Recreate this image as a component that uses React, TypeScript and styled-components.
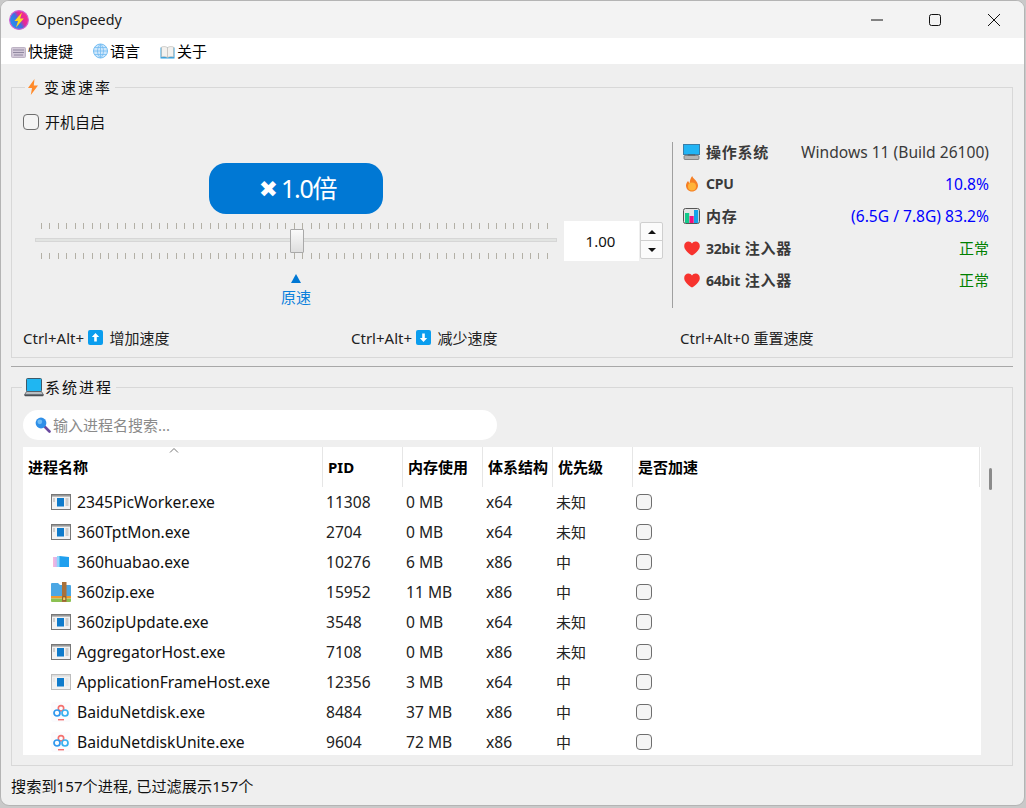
import React from "react";
import styled, { createGlobalStyle } from "styled-components";

const FONT = `"Noto Sans", "Noto Sans CJK SC", "DejaVu Sans", sans-serif`;

const Global = createGlobalStyle`
  html, body { margin: 0; padding: 0; background: #c9c9c9; overflow: hidden; }
  * { box-sizing: border-box; }
  body { font-family: ${FONT}; font-size: 15px; color: #111; }
`;

const Win = styled.div`
  width: 1025px; height: 806px; display: flex; flex-direction: column;
  border: 1px solid #b4b4b4; border-radius: 9px; overflow: hidden; background: #efefef;
`;
const TitleBar = styled.div`
  height: 37px; flex: none; display: flex; align-items: center; padding: 0 1px 0 8px; background: #f3f3f3; font-size: 14px;
`;
const TitleText = styled.span`margin-left: 7px; flex: 1; color: #1a1a1a; font-size: 14.3px;`;
const WinButton = styled.div`
  width: 58.5px; height: 37px; display: flex; align-items: center; justify-content: center;
`;
const MenuBar = styled.div`
  height: 26px; flex: none; display: flex; gap: 20px; align-items: center; padding-left: 10px; background: #fff;
`;
const MenuItem = styled.div`display: flex; align-items: center; gap: 2px; color: #000;`;
const Up = styled.span`margin-bottom: 2px;`;
const Content = styled.div`padding: 23px 11px 0 10px; display: flex; flex-direction: column; flex: none;`;
const Group = styled.section`position: relative; border: 1px solid #d8d8d8;`;
const SpeedGroup = styled(Group)`padding: 26px 11px 10px;`;
const ProcGroup = styled(Group)`margin-top: 20px; padding: 22px 11px 10px;`;
const Legend = styled.div<{ $left: number; $gap: number }>`
  position: absolute; top: -12px; left: ${(p) => p.$left}px; height: 22px; padding: 0 3px 0 2px;
  display: flex; align-items: center; gap: ${(p) => p.$gap}px; background: #efefef; font-size: 15px; letter-spacing: 2px; color: #111;
`;
const LegendText = styled.span`margin-bottom: 2px;`;
const Separator = styled.div`height: 1px; margin-top: 8px; background: #a8a8a8;`;
const CheckRow = styled.label`display: flex; align-items: center; gap: 6px; height: 16px; color: #111;`;
const Check = styled.input.attrs({ type: "checkbox" })`
  appearance: none; margin: 0; width: 16px; height: 16px; flex: none; background: #f4f4f4; border: 1.5px solid #6e6e6e; border-radius: 4px;
`;
const Main = styled.div`display: flex; height: 166px; margin-top: 12px;`;
const SpeedCol = styled.div`width: 649px; flex: none; padding: 21px 0 0 12px; display: flex; flex-direction: column;`;
const SliderWidth = styled.div`width: 522px; flex: none; display: flex; flex-direction: column; align-items: center;`;
const Pill = styled.div`
  width: 174px; height: 51px; background: #0078d4; color: #fff; border-radius: 17px; font-size: 25px; letter-spacing: -1.3px;
  display: flex; align-items: center; justify-content: center; gap: 3px; padding: 0 0 3px 3px;
`;
const Cross = styled.span`font-family: "DejaVu Sans", sans-serif; font-size: 23px; letter-spacing: 0; margin-top: 3px;`;
const SliderRow = styled.div`display: flex; margin-top: 7px; height: 40px;`;
const SliderBody = styled.div`width: 522px; flex: none; position: relative; display: flex; flex-direction: column; padding-top: 2px;`;
const Groove = styled.div`height: 4px; margin: 9px 0 11px; background: #e2e4e2; border: 1px solid #d6d6d6;`;
const Thumb = styled.div`
  position: absolute; left: 255px; top: 8px; width: 14px; height: 24px; border: 1px solid #a9a9a9; border-radius: 1px;
  background: linear-gradient(#fafafa, #dedede);
`;
const ValueInput = styled.div`
  width: 75px; height: 40px; margin-left: 7px; padding: 0 2px 1px 0; background: #fff; color: #111; display: flex; align-items: center; justify-content: center;
`;
const Spin = styled.div`
  width: 23px; height: 37px; margin: 1px 0 0 1px; border: 1px solid #cfcfcf; border-radius: 2px; background: #fbfbfb; display: flex; flex-direction: column;
`;
const SpinPart = styled.div<{ $down?: boolean }>`
  flex: 1; display: flex; align-items: center; justify-content: center;
  ${(p) => (p.$down ? "border-top: 1px solid #cfcfcf;" : "")}
`;
const Arrow = styled.div<{ $down?: boolean }>`
  width: 0; height: 0; border-left: 4px solid transparent; border-right: 4px solid transparent;
  ${(p) => (p.$down ? "border-top: 4px solid #111;" : "border-bottom: 4px solid #111;")}
`;
const Triangle = styled.div`
  width: 0; height: 0; margin-top: 13px; border-left: 5.5px solid transparent; border-right: 5.5px solid transparent; border-bottom: 9px solid #0078d4;
`;
const MarkerText = styled.div`margin-top: 4px; line-height: 20px; color: #0a7fdc;`;
const InfoPanel = styled.div`
  flex: 1; border-left: 1px solid #a0a0a0; padding: 0 12px 0 10px; display: flex; flex-direction: column; gap: 12px;
`;
const InfoRow = styled.div`height: 20px; display: flex; align-items: center; gap: 6px;`;
const InfoIcon = styled.span`width: 17px; height: 20px; flex: none; display: flex; align-items: center; justify-content: center;`;
const InfoLabel = styled.span`font-weight: 700; color: #3a3a3a; letter-spacing: 0.75px; font-size: 15px; margin-bottom: 2px;`;
const LatinPart = styled.span`font-size: 14px; letter-spacing: -0.2px;`;
const InfoValue = styled.span<{ $color: string; $cjk?: boolean }>`
  margin-left: auto; color: ${(p) => p.$color}; font-size: ${(p) => (p.$cjk ? "15px" : "15.6px")};
  margin-bottom: ${(p) => (p.$cjk ? "2px" : "0")};
`;
const Shortcuts = styled.div`display: grid; grid-template-columns: 328px 329px 1fr; height: 20px; margin-top: 19px;`;
const Shortcut = styled.div`display: flex; align-items: center; padding-bottom: 3px; color: #222;`;
const KeyIcon = styled.span`display: flex; margin: 0 7px 0 3.5px;`;
const Search = styled.div`
  width: 474px; height: 30px; border-radius: 15px; background: #fff; display: flex; align-items: center; gap: 2px; padding-left: 12px; color: #8a8a8a;
`;
const TableWrap = styled.div`display: flex; margin-top: 7px; height: 308px;`;
const Table = styled.div`position: relative; width: 958px; flex: none; background: #fff; overflow: hidden;`;
const COLS = "300px 80px 80px 70px 80px 347px";
const HeadRow = styled.div`display: grid; grid-template-columns: ${COLS}; height: 40px;`;
const HeadCell = styled.div`
  display: flex; align-items: center; padding: 0 0 1px 5px; font-weight: 700; font-size: 15px; color: #000; border-right: 1px solid #e6e6e6;
`;
const SortCaret = styled.svg`position: absolute; left: 146px; top: 0;`;
const Row = styled.div`display: grid; grid-template-columns: ${COLS}; height: 30px;`;
const NameCell = styled.div`display: flex; align-items: center; gap: 6px; padding-left: 28px; color: #111; font-size: 15.7px;`;
const Cell = styled.div<{ $cjk?: boolean }>`
  display: flex; align-items: center; padding: ${(p) => (p.$cjk ? "0 0 2px 3px" : "0 0 0 3px")}; color: #222;
  font-size: ${(p) => (p.$cjk ? "15px" : "15.6px")};
`;
const Scrollbar = styled.div`position: relative; width: 19px; flex: none;`;
const ScrollThumb = styled.div`position: absolute; left: 8px; top: 21px; width: 3px; height: 22px; border-radius: 2px; background: #8b8b8b;`;
const StatusBar = styled.div`flex: 1; display: flex; align-items: center; padding: 0 0 2px 10px; color: #111; font-size: 15.2px;`;

const Logo = () => (
  <svg width="20" height="20" viewBox="0 0 20 20">
    <defs>
      <linearGradient id="lg" x1="0" y1="0.8" x2="1" y2="0.2">
        <stop offset="0" stopColor="#1a9cf2" />
        <stop offset="0.45" stopColor="#3f6fe0" />
        <stop offset="0.62" stopColor="#e0289a" />
        <stop offset="1" stopColor="#ff2f86" />
      </linearGradient>
    </defs>
    <circle cx="10" cy="10" r="9.4" fill="url(#lg)" stroke="#cf5fd2" strokeWidth="1.1" />
    <path d="M13 2.6 5.4 11h3.6L7 17.6 14.8 8.6h-3.7z" fill="#ffd91f" />
  </svg>
);
const KeyboardIcon = () => (
  <svg width="15" height="15" viewBox="0 0 15 15">
    <rect x="0.5" y="3.5" width="14" height="10" rx="1" fill="#d2c8d8" stroke="#bdb3c4" />
    <path d="M2 6h11M2 8.5h11M3 11h9" stroke="#9088a0" />
  </svg>
);
const GlobeIcon = () => (
  <svg width="15" height="16" viewBox="0 0 15 15">
    <circle cx="7.5" cy="7.5" r="7" fill="#cfe7fb" stroke="#74bdf2" />
    <path d="M.5 7.5h14M2 4h11M2 11h11M7.5.5v14M7.5.5c-4 4-4 10 0 14M7.5.5c4 4 4 10 0 14" fill="none" stroke="#74bdf2" strokeWidth=".8" />
  </svg>
);
const BookIcon = () => (
  <svg width="15" height="15" viewBox="0 0 15 15">
    <path d="M.5 3.5h14v11H.5z" fill="#2f9fe0" />
    <path d="M1.5 3C4 2.2 6 2.5 7.5 3.6 9 2.5 11 2.2 13.5 3v10c-2.5-.6-4.5-.4-6 .5-1.5-.9-3.5-1.1-6-.5z" fill="#f3f1ee" stroke="#b9b5b0" strokeWidth=".6" />
    <path d="M7.5 3.6v9.9" stroke="#b9b5b0" strokeWidth=".7" />
  </svg>
);
const BoltIcon = () => (
  <svg width="12" height="16" viewBox="0 0 12 16">
    <path d="M7.5 0 1 9h4l-1.2 7L11 6.5H6.8z" fill="#ff8a2a" />
  </svg>
);
const MonitorIcon = () => (
  <svg width="17" height="16" viewBox="0 0 17 16">
    <rect x=".5" y=".5" width="16" height="10" fill="#22b4f4" stroke="#3a7ea8" />
    <path d="M5 10.5h7l.6 1.5H4.4z" fill="#555" />
    <rect x="1" y="11.5" width="15" height="4" rx="1" fill="#b5b5b5" stroke="#666" strokeWidth=".7" />
  </svg>
);
const FlameIcon = () => (
  <svg width="14" height="16" viewBox="0 0 14 16">
    <path d="M7.2 0c.6 2.6 5.8 4.8 5.8 9.6C13 13 10.4 15.6 7 15.6S1 13 1 9.6c0-2 1-3.7 2.2-4.6.2 1 .8 1.8 1.5 2C4.8 4.4 5.7 1.8 7.2 0z" fill="#f57f25" />
    <circle cx="7" cy="10.6" r="4" fill="#ffb338" />
  </svg>
);
const ChartIcon = () => (
  <svg width="17" height="16" viewBox="0 0 17 16">
    <rect x=".5" y=".5" width="16" height="15" rx="2" fill="#e4e4e4" stroke="#555" />
    <rect x="2" y="5" width="4.2" height="10" fill="#12c98a" />
    <rect x="6.5" y="8" width="4.2" height="7" fill="#f0107e" />
    <rect x="11" y="2" width="4.2" height="13" fill="#12a3ea" />
  </svg>
);
const HeartIcon = () => (
  <svg width="16" height="15" viewBox="0 0 16 15">
    <path d="M8 14.6C3 11 .2 8.2.2 4.9.2 2.3 2.2.5 4.4.5 6 .5 7.3 1.3 8 2.6 8.7 1.3 10 .5 11.6.5c2.2 0 4.2 1.8 4.2 4.4 0 3.3-2.8 6.1-7.8 9.7z" fill="#f7332e" />
  </svg>
);
const ArrowKey = ({ down }: { down?: boolean }) => (
  <svg width="15" height="15" viewBox="0 0 15 15">
    <rect width="15" height="15" rx="2" fill="#0a9dee" />
    <path d={down ? "M7.5 12 3.8 8h2.4V3.5h2.6V8h2.4z" : "M7.5 3 11.2 7H8.8v4.5H6.2V7H3.8z"} fill="#fff" />
  </svg>
);
const LaptopIcon = () => (
  <svg width="20" height="19" viewBox="0 0 20 19">
    <rect x="2.5" y=".5" width="15" height="13" rx="1" fill="#1fb6f2" stroke="#3d5a6a" />
    <path d="M2.5 13.5h15l2 3.5H.5z" fill="#b9bfc3" stroke="#4a4f55" strokeWidth=".7" />
    <rect x="0.5" y="16.6" width="19" height="1.6" rx=".8" fill="#4a4f55" />
  </svg>
);
const SearchIcon = () => (
  <svg width="16" height="16" viewBox="0 0 16 16">
    <path d="m9.5 9.5 5 5" stroke="#6a4aa0" strokeWidth="2.6" strokeLinecap="round" />
    <circle cx="6" cy="6" r="5.4" fill="#2f8fe8" />
    <circle cx="4.8" cy="4.8" r="2.4" fill="#6fbcf5" />
  </svg>
);
const WindowIcon = ({ light }: { light?: boolean }) => (
  <svg width="20" height="16" viewBox="0 0 20 16">
    <rect x=".5" y=".5" width="19" height="15" fill="#f2f2f2" stroke={light ? "#bdbdbd" : "#777"} />
    <rect x="1" y="1" width="18" height="1.6" fill={light ? "#ddd" : "#999"} />
    <rect x="6" y="4" width="7" height="8.5" fill="#0f7bcb" />
    <path d="M14.5 5h3M14.5 7h3M14.5 9h3M14.5 11h3M2 5h2M2 7h2" stroke={light ? "#ddd" : "#aaa"} />
  </svg>
);
const HuabaoIcon = () => (
  <svg width="20" height="16" viewBox="0 0 20 16">
    <defs>
      <linearGradient id="hb" x1="0" x2="1"><stop offset="0" stopColor="#ffb6d8" /><stop offset="1" stopColor="#c6b8f4" /></linearGradient>
    </defs>
    <path d="M2 3h4v10H2z" fill="url(#hb)" />
    <path d="M6 2h2.5l9.5 1v10H6z" fill="#1f9fee" />
    <path d="M6 2h2.5v11H6z" fill="#8fd6fa" />
  </svg>
);
const ZipIcon = () => (
  <svg width="20" height="20" viewBox="0 0 20 20">
    <path d="M0 2a1 1 0 0 1 1-1h6l2 2h10a1 1 0 0 1 1 1v10H0z" fill="#4ba7e4" />
    <rect y="14" width="20" height="2.5" fill="#f09a2e" />
    <path d="M0 16.5h20V19a1 1 0 0 1-1 1H1a1 1 0 0 1-1-1z" fill="#8cc152" />
    <rect x="11" y="0" width="4.5" height="20" fill="#a9713a" />
    <rect x="11.8" y="15" width="3" height="3.5" fill="#f5d06a" stroke="#6b4420" strokeWidth=".6" />
  </svg>
);
const BaiduIcon = () => (
  <svg width="20" height="20" viewBox="0 0 20 20">
    <rect width="20" height="20" rx="3" fill="#fbfbfd" />
    <circle cx="10" cy="6.3" r="2.7" fill="none" stroke="#f5706e" strokeWidth="1.6" />
    <circle cx="6" cy="11" r="3" fill="none" stroke="#2e97ee" strokeWidth="1.7" />
    <circle cx="14" cy="11" r="3" fill="none" stroke="#39b0ef" strokeWidth="1.7" />
    <rect x="7" y="17" width="6" height="1.4" fill="#f5706e" />
  </svg>
);

const Ticks = () => {
  const xs = Array.from({ length: 61 }, (_, i) => Math.round(6 + i * 8.43));
  return (
    <svg width="522" height="6" style={{ display: "block" }}>
      {xs.map((x) => (
        <rect key={x} x={x} y={0} width={1} height={6} fill="#b3b0a6" />
      ))}
    </svg>
  );
};

type Proc = [React.ReactNode, string, string, string, string, string];
const procs: Proc[] = [
  [<WindowIcon />, "2345PicWorker.exe", "11308", "0 MB", "x64", "未知"],
  [<WindowIcon />, "360TptMon.exe", "2704", "0 MB", "x64", "未知"],
  [<HuabaoIcon />, "360huabao.exe", "10276", "6 MB", "x86", "中"],
  [<ZipIcon />, "360zip.exe", "15952", "11 MB", "x86", "中"],
  [<WindowIcon />, "360zipUpdate.exe", "3548", "0 MB", "x64", "未知"],
  [<WindowIcon />, "AggregatorHost.exe", "7108", "0 MB", "x86", "未知"],
  [<WindowIcon light />, "ApplicationFrameHost.exe", "12356", "3 MB", "x64", "中"],
  [<BaiduIcon />, "BaiduNetdisk.exe", "8484", "37 MB", "x86", "中"],
  [<BaiduIcon />, "BaiduNetdiskUnite.exe", "9604", "72 MB", "x86", "中"],
];
const heads = ["进程名称", "PID", "内存使用", "体系结构", "优先级", "是否加速"];
const info: [React.ReactNode, React.ReactNode, string, string, boolean][] = [
  [<MonitorIcon />, "操作系统", "Windows 11 (Build 26100)", "#3a3a3a", false],
  [<FlameIcon />, <LatinPart>CPU</LatinPart>, "10.8%", "#0000ff", false],
  [<ChartIcon />, "内存", "(6.5G / 7.8G) 83.2%", "#0000ff", false],
  [<HeartIcon />, <><LatinPart>32bit</LatinPart> 注入器</>, "正常", "#008000", true],
  [<HeartIcon />, <><LatinPart>64bit</LatinPart> 注入器</>, "正常", "#008000", true],
];

export default function App() {
  return (
    <>
      <Global />
      <Win>
        <TitleBar>
          <Logo />
          <TitleText>OpenSpeedy</TitleText>
          <WinButton>
            <svg width="14" height="14" viewBox="0 0 14 14"><path d="M1 7h12" stroke="#111" strokeWidth="1" /></svg>
          </WinButton>
          <WinButton>
            <svg width="14" height="14" viewBox="0 0 14 14"><rect x="1.5" y="1.5" width="11" height="11" rx="2" fill="none" stroke="#111" /></svg>
          </WinButton>
          <WinButton>
            <svg width="14" height="14" viewBox="0 0 14 14"><path d="M1 1l12 12M13 1 1 13" stroke="#111" /></svg>
          </WinButton>
        </TitleBar>
        <MenuBar>
          <MenuItem><KeyboardIcon /><Up>快捷键</Up></MenuItem>
          <MenuItem><GlobeIcon /><Up>语言</Up></MenuItem>
          <MenuItem><BookIcon /><Up>关于</Up></MenuItem>
        </MenuBar>
        <Content>
          <SpeedGroup>
            <Legend $left={13} $gap={5}><BoltIcon /><LegendText>变速速率</LegendText></Legend>
            <CheckRow><Check /><Up>开机自启</Up></CheckRow>
            <Main>
              <SpeedCol>
                <SliderWidth>
                  <Pill><Cross>✖</Cross><span>1.0倍</span></Pill>
                </SliderWidth>
                <SliderRow>
                  <SliderBody>
                    <Ticks />
                    <Groove />
                    <Ticks />
                    <Thumb />
                  </SliderBody>
                  <ValueInput>1.00</ValueInput>
                  <Spin>
                    <SpinPart><Arrow /></SpinPart>
                    <SpinPart $down><Arrow $down /></SpinPart>
                  </Spin>
                </SliderRow>
                <SliderWidth>
                  <Triangle />
                  <MarkerText>原速</MarkerText>
                </SliderWidth>
              </SpeedCol>
              <InfoPanel>
                {info.map(([icon, label, value, color, cjk], i) => (
                  <InfoRow key={i}>
                    <InfoIcon>{icon}</InfoIcon>
                    <InfoLabel>{label}</InfoLabel>
                    <InfoValue $color={color} $cjk={cjk}>{value}</InfoValue>
                  </InfoRow>
                ))}
              </InfoPanel>
            </Main>
            <Shortcuts>
              <Shortcut>Ctrl+Alt+<KeyIcon><ArrowKey /></KeyIcon>增加速度</Shortcut>
              <Shortcut>Ctrl+Alt+<KeyIcon><ArrowKey down /></KeyIcon>减少速度</Shortcut>
              <Shortcut>Ctrl+Alt+0 重置速度</Shortcut>
            </Shortcuts>
          </SpeedGroup>
          <Separator />
          <ProcGroup>
            <Legend $left={10} $gap={1}><LaptopIcon /><LegendText>系统进程</LegendText></Legend>
            <Search><SearchIcon /><Up>输入进程名搜索...</Up></Search>
            <TableWrap>
              <Table>
                <HeadRow>
                  {heads.map((h) => <HeadCell key={h}>{h}</HeadCell>)}
                </HeadRow>
                <SortCaret width="10" height="7" viewBox="0 0 10 7">
                  <path d="M1 5.5 5 1.5l4 4" fill="none" stroke="#777" />
                </SortCaret>
                {procs.map(([icon, name, pid, mem, arch, prio]) => (
                  <Row key={name}>
                    <NameCell>{icon}{name}</NameCell>
                    <Cell>{pid}</Cell>
                    <Cell>{mem}</Cell>
                    <Cell>{arch}</Cell>
                    <Cell $cjk>{prio}</Cell>
                    <Cell><Check /></Cell>
                  </Row>
                ))}
              </Table>
              <Scrollbar><ScrollThumb /></Scrollbar>
            </TableWrap>
          </ProcGroup>
        </Content>
        <StatusBar>搜索到157个进程, 已过滤展示157个</StatusBar>
      </Win>
    </>
  );
}
